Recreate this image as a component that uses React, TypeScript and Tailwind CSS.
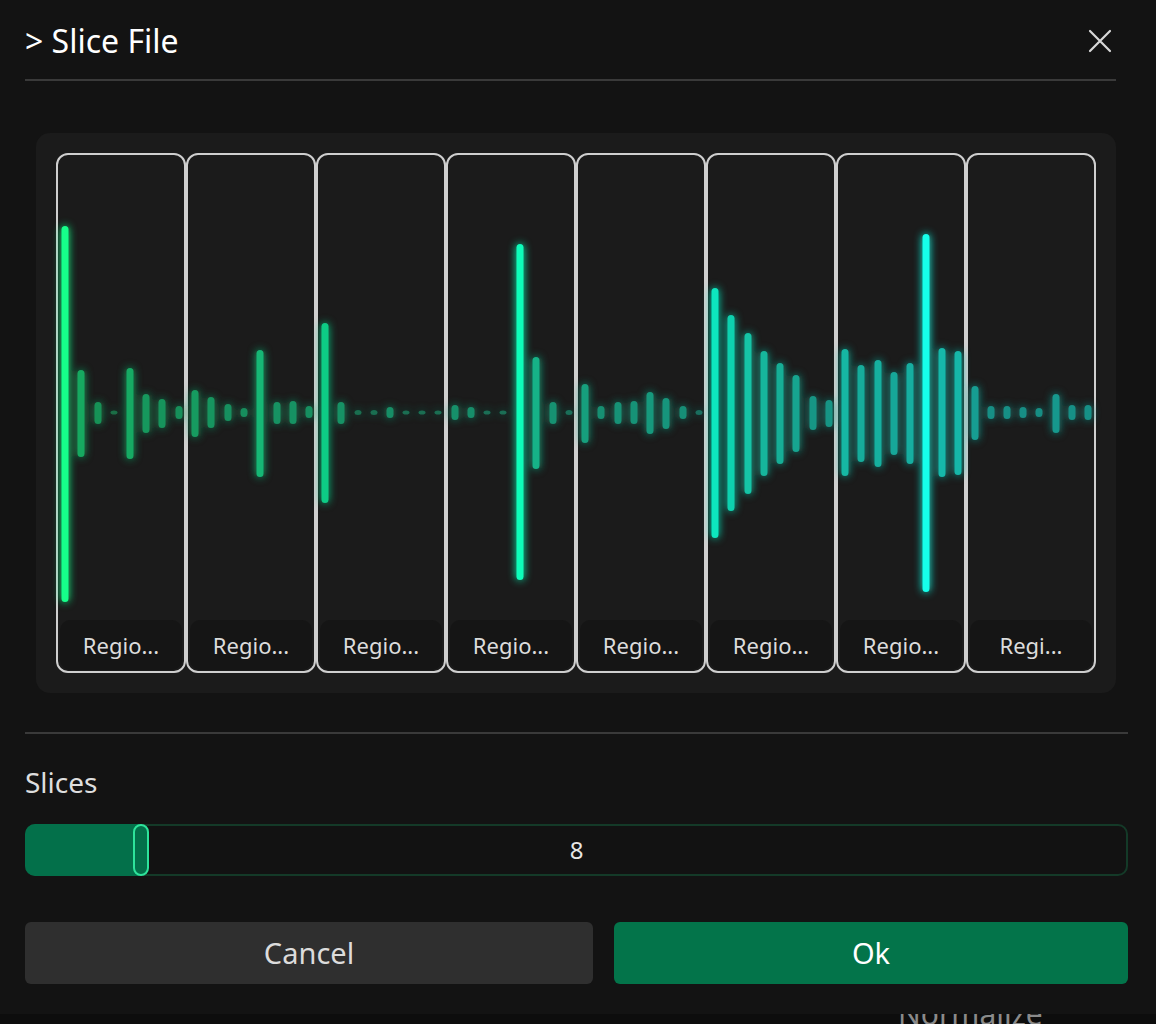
import React from 'react';

// x position, top, bottom of each waveform bar (px in the panel's frame)
const BARS: [number, number, number][] = [
  [65, 226, 602], [81, 370, 457], [98, 402, 424], [114, 411, 414], [130, 368, 459], [146, 394, 433],
  [162, 399, 428], [179, 406, 419], [195, 390, 437], [211, 397, 428], [228, 404, 421], [244, 408, 417],
  [260, 350, 477], [277, 402, 424], [293, 401, 424], [309, 406, 418], [325, 323, 503], [341, 402, 424],
  [358, 410, 415], [374, 410, 415], [390, 407, 418], [406, 411, 414], [422, 412, 413], [438, 412, 413],
  [455, 405, 420], [471, 407, 418], [487, 412, 413], [503, 412, 413], [520, 244, 580], [536, 357, 469],
  [553, 402, 424], [569, 410, 415], [585, 384, 443], [601, 406, 419], [618, 402, 424], [634, 401, 424],
  [650, 392, 434], [666, 398, 429], [683, 406, 419], [699, 410, 415], [715, 288, 538], [731, 315, 511],
  [748, 333, 494], [764, 351, 476], [780, 363, 464], [796, 375, 452], [813, 396, 430], [829, 400, 427],
  [845, 349, 476], [861, 365, 462], [878, 360, 467], [894, 372, 455], [910, 363, 464], [926, 234, 592],
  [942, 348, 477], [958, 351, 475], [975, 386, 440], [991, 406, 419], [1007, 406, 419], [1023, 407, 418],
  [1039, 408, 417], [1056, 394, 433], [1072, 405, 420], [1088, 405, 420],
];

function barColor(x: number, h: number) {
  const t = Math.min(1, (x - 65) / 860);
  const hue = 150 + t * 25;
  const amp = Math.min(1, h / 360);
  const light = 32 + amp * 22;
  const sat = 70 + amp * 30;
  return `hsl(${hue} ${sat}% ${light}%)`;
}

function Waveform() {
  return (
    <svg className="absolute inset-0" width="1080" height="560" viewBox="36 133 1080 560">
      <defs>
        <filter id="glow" x="-50%" y="-20%" width="200%" height="140%">
          <feGaussianBlur stdDeviation="4" result="b" />
          <feMerge>
            <feMergeNode in="b" />
            <feMergeNode in="SourceGraphic" />
          </feMerge>
        </filter>
      </defs>
      <g filter="url(#glow)">
        {BARS.map(([x, t, b], i) => {
          const h = Math.max(b - t, 4);
          return (
            <rect key={i} x={x - 3.5} y={(t + b) / 2 - h / 2} width={7} height={h} rx={3.5}
              fill={barColor(x, b - t)} opacity={h < 6 ? 0.7 : 1} />
          );
        })}
      </g>
    </svg>
  );
}

export default function App() {
  return (
    <div className="w-[1156px] h-[1024px] bg-[#0d0d0d] overflow-hidden relative" style={{ fontFamily: '"Noto Sans", "Open Sans", sans-serif' }}>
      <div className="absolute left-[898px] top-[994px] text-[30px] leading-[40px] text-[#8a8a8a]">Normalize</div>
      <div className="relative h-[1014px] bg-[#131313] px-[25px] pt-[17px] flex flex-col">
        <div className="flex items-center justify-between pr-[12px] h-[48px]">
          <h1 className="text-[32px] text-white leading-none">&gt; Slice File</h1>
          <svg width="26" height="26" viewBox="0 0 26 26" className="mr-[6px]">
            <path d="M3 3 L23 23 M23 3 L3 23" stroke="#d8d8d8" strokeWidth="2.2" strokeLinecap="round" />
          </svg>
        </div>
        <div className="mt-[14px] mr-[15px] h-[2px] bg-[#3a3a3a]" />

        <div className="mt-[52px] ml-[11px] mr-[15px] h-[560px] bg-[#1b1b1b] rounded-[14px] relative px-[20px] py-[20px]">
          <div className="relative h-full flex">
            {Array.from({ length: 8 }).map((_, i) => (
              <div key={i} className="w-[130px] h-full border-2 border-[#cfcfcf] rounded-[12px] flex flex-col justify-end">
                <div className="h-[50px] bg-[#151515] rounded-[10px] mx-[2px] mb-[1px] flex items-center justify-center text-[22px] text-[#dcdcdc]">
                  {i === 7 ? 'Regi...' : 'Regio...'}
                </div>
              </div>
            ))}
          </div>
          <Waveform />
        </div>

        <div className="mt-[39px] h-[2px] bg-[#3a3a3a] mr-[3px]" />
        <div className="mt-[34px] text-[28px] text-[#dedede] leading-none">Slices</div>

        <div className="mt-[28px] mr-[3px] h-[52px] rounded-[10px] border-2 border-[#143a28] bg-[#121212] relative flex items-center justify-center">
          <div className="absolute left-[-2px] top-[-2px] bottom-[-2px] w-[117px] bg-[#03704a] rounded-l-[10px]" />
          <div className="absolute left-[106px] top-[-2px] bottom-[-2px] w-[16px] rounded-full border-[2.5px] border-[#2ee39b] bg-[#03704a]" />
          <span className="relative text-[24px] text-[#e6e6e6]">8</span>
        </div>

        <div className="mt-[46px] mr-[3px] flex gap-[21px]">
          <button className="w-[568px] h-[62px] rounded-[6px] bg-[#2f2f2f] text-[29px] text-[#dcdcdc]">Cancel</button>
          <button className="flex-1 h-[62px] rounded-[6px] bg-[#03744a] text-[29px] text-white">Ok</button>
        </div>
      </div>
    </div>
  );
}
